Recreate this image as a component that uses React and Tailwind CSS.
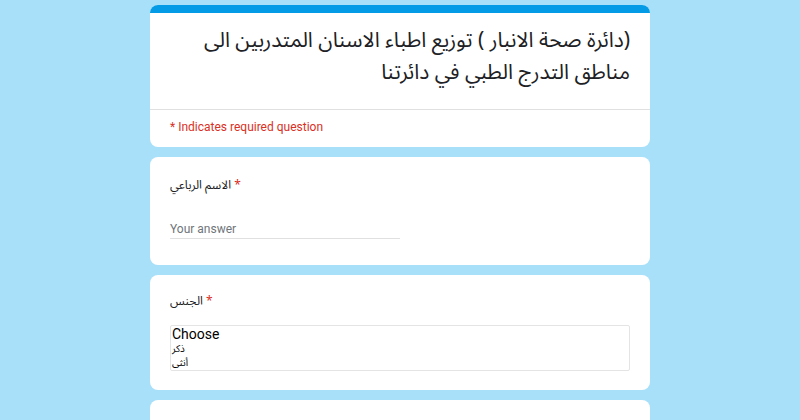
export default function App() {
  return (
    <div className="min-h-[420px] bg-[#a8dff9] overflow-hidden">
      <div className="mx-auto w-[500px] pt-[5px] flex flex-col gap-[10px] font-['Roboto','Liberation_Sans','DejaVu_Sans',sans-serif]">
        {/* header card */}
        <div className="bg-white rounded-lg overflow-hidden">
          <div className="h-[8px] bg-[#039be5]" />
          <div className="px-5 pt-[11px] pb-[21px] border-b border-[#e0e0e0]">
            <h1
              dir="rtl"
              className="text-[21px] leading-[32px] text-[#202124] font-['Noto_Sans_Arabic','DejaVu_Sans',sans-serif]"
            >
              (دائرة صحة الانبار ) توزيع اطباء الاسنان المتدربين الى
              <br />
              مناطق التدرج الطبي في دائرتنا
            </h1>
          </div>
          <div className="px-5 pt-[9px] pb-[12px] text-[12px] leading-[16px] text-[#d93025]">
            * Indicates required question
          </div>
        </div>

        {/* name question */}
        <div className="bg-white rounded-lg px-5 pt-[21px] pb-[26px]">
          <div className="text-[12px] leading-[16px] text-[#202124] font-['Noto_Sans_Arabic','DejaVu_Sans',sans-serif]">
            الاسم الرباعي <span className="text-[#d93025]">*</span>
          </div>
          <div className="mt-[27px] w-[230px] border-b border-[#e0e0e0] pb-[1px] text-[12px] leading-[16px] text-[#70757a]">
            Your answer
          </div>
        </div>

        {/* gender question */}
        <div className="bg-white rounded-lg px-5 pt-[19px] pb-[19px]">
          <div className="text-[12px] leading-[16px] text-[#202124] font-['Noto_Sans_Arabic','DejaVu_Sans',sans-serif]">
            الجنس <span className="text-[#d93025]">*</span>
          </div>
          <div className="mt-[15px] border border-[#e4e4e4] rounded-[2px] h-[46px] flex flex-col px-[1px] text-black">
            <span className="text-[14px] leading-[16px] font-['Roboto','Liberation_Sans',sans-serif]">Choose</span>
            <span className="text-[10px] leading-[14px] font-['Noto_Sans_Arabic','DejaVu_Sans',sans-serif]">ذكر</span>
            <span className="text-[10px] leading-[14px] font-['Noto_Sans_Arabic','DejaVu_Sans',sans-serif]">أنثى</span>
          </div>
        </div>

        <div className="bg-white rounded-lg h-[60px]" />
      </div>
    </div>
  );
}
